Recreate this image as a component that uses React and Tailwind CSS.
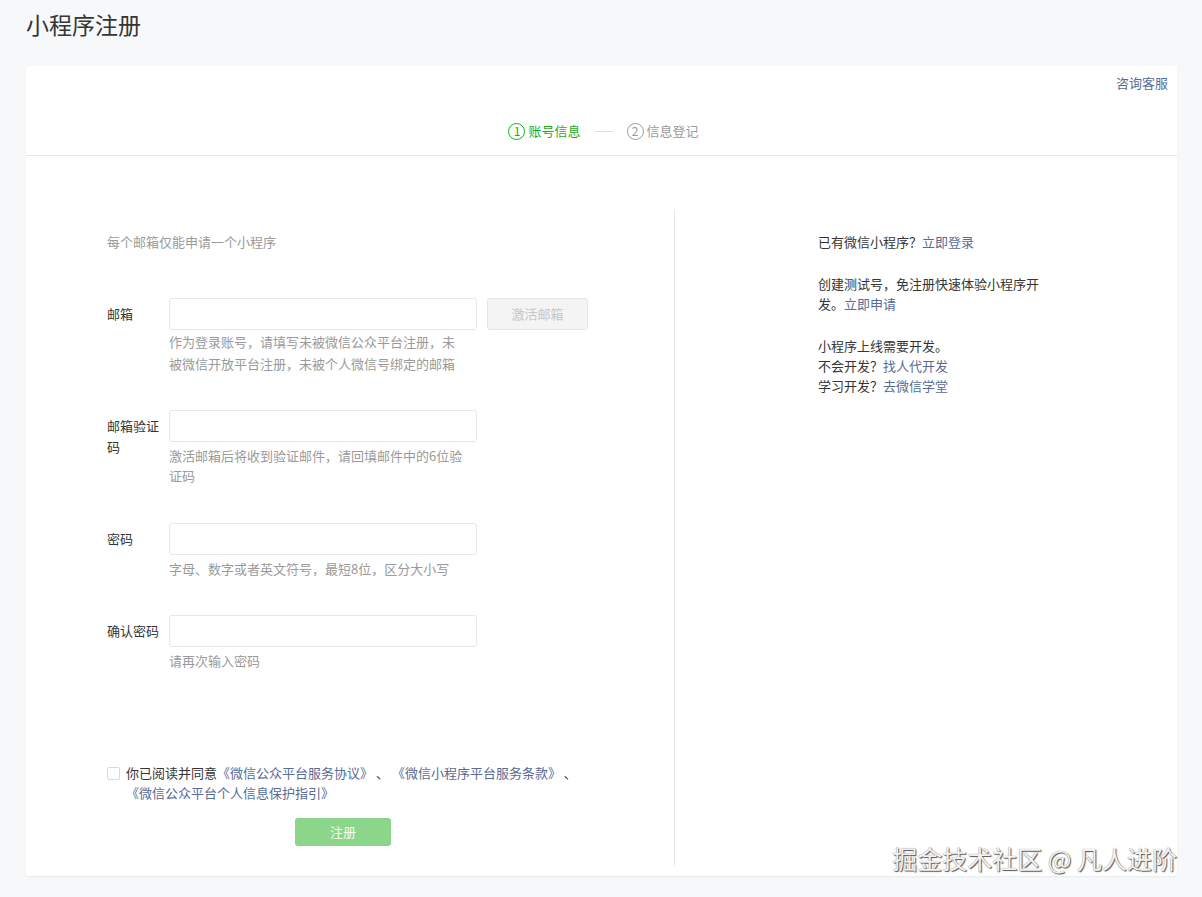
import React from 'react'

const font = { fontFamily: '"Noto Sans CJK SC", "Noto Sans", sans-serif' }

function clsx2(...c) {
  return c.filter(Boolean).join(' ')
}

function Field({ label, labelClass = 'pt-[6px] leading-[20px]', helper, helperClass = 'leading-[20px] mt-[4px]', button, className = '' }) {
  return (
    <div className={`flex ${className}`}>
      <div className={`w-[62px] shrink-0 pr-[10px] text-[13px] text-[#353535] ${labelClass}`}>{label}</div>
      <div>
        <div className="flex">
          <input className="w-[308px] h-[32px] border border-[#e7e7e7] rounded-[3px] bg-white outline-none px-2 text-[13px]" />
          {button && (
            <button className="ml-[10px] w-[101px] h-[32px] rounded-[3px] border border-[#e5e5e5] bg-[#f4f4f4] text-[13px] text-[#c6c6c6]">
              {button}
            </button>
          )}
        </div>
        <p className={`w-[296px] text-[13px] text-[#9a9a9a] ${helperClass}`}>{helper}</p>
      </div>
    </div>
  )
}

function Circle({ n, active }) {
  return (
    <span
      className={clsx2(
        'inline-flex items-center justify-center w-[17px] h-[17px] rounded-full border text-[12px] leading-none mr-[3px]',
        active ? 'border-[#1aad19] text-[#1aad19]' : 'border-[#9a9a9a] text-[#9a9a9a]'
      )}
    >
      {n}
    </span>
  )
}

export default function App() {
  return (
    <div className="relative min-h-[897px] bg-[#f6f8f9] pl-[26px] pr-[25px]" style={font}>
      <h1 className="pt-[8px] text-[23px] leading-[32px] text-[#353535] font-normal">小程序注册</h1>

      <div className="mt-[26px] bg-white rounded-[2px] shadow-[0_1px_2px_rgba(0,0,0,0.06)]">
        {/* header */}
        <div className="border-b border-[#e7e7e7] pb-[14px]">
          <div className="flex justify-end px-[9px] pt-[8px] text-[13px] leading-[18px]">
            <a className="text-[#576b95] cursor-pointer">咨询客服</a>
          </div>
          <div className="mt-[29px] flex items-center justify-center h-[20px] text-[13px] pl-[4px]">
            <Circle n="1" active />
            <span className="text-[#1aad19]">账号信息</span>
            <span className="mx-[14px] w-[18px] h-px bg-[#e0e0e0]" />
            <Circle n="2" />
            <span className="text-[#9a9a9a]">信息登记</span>
          </div>
        </div>

        {/* body */}
        <div className="flex pt-[54px] pb-[10px]">
          <div className="w-[649px] border-r border-[#e7e7e7] pl-[81px] pt-[22px] pb-[20px]">
            <p className="text-[13px] leading-[20px] text-[#9a9a9a]">每个邮箱仅能申请一个小程序</p>

            <Field
              className="mt-[46px]"
              label="邮箱"
              button="激活邮箱"
              helperClass="leading-[22px] mt-px"
              helper="作为登录账号，请填写未被微信公众平台注册，未被微信开放平台注册，未被个人微信号绑定的邮箱"
            />
            <Field
              className="mt-[35px]"
              label="邮箱验证码"
              labelClass="pt-[5px] leading-[21px]"
              helper="激活邮箱后将收到验证邮件，请回填邮件中的6位验证码"
            />
            <Field className="mt-[37px]" label="密码" helper="字母、数字或者英文符号，最短8位，区分大小写" />
            <Field className="mt-[36px]" label="确认密码" helper="请再次输入密码" />

            <div className="mt-[92px] flex text-[13px] leading-[20px]">
              <span className="mt-[4px] w-[13px] h-[13px] shrink-0 border border-[#d9d9d9] rounded-[2px] bg-white" />
              <p className="ml-[6px] w-[460px] text-[#353535]">
                你已阅读并同意
                <a className="text-[#576b95]">《微信公众平台服务协议》</a>{' '}、{' '}
                <a className="text-[#576b95]">《微信小程序平台服务条款》</a>{' '}、{' '}
                <a className="text-[#576b95]">《微信公众平台个人信息保护指引》</a>
              </p>
            </div>

            <button className="mt-[15px] ml-[188px] w-[96px] h-[28px] rounded-[3px] bg-[#8cd68c] text-[13px] text-white/90">
              注册
            </button>
          </div>

          <div className="pl-[143px] pt-[22px] text-[13px] leading-[20px] text-[#353535]">
            <p>
              已有微信小程序？<a className="text-[#576b95]">立即登录</a>
            </p>
            <p className="mt-[22px] w-[226px]">
              创建测试号，免注册快速体验小程序开发。<a className="text-[#576b95]">立即申请</a>
            </p>
            <div className="mt-[22px]">
              <p>小程序上线需要开发。</p>
              <p>
                不会开发？<a className="text-[#576b95]">找人代开发</a>
              </p>
              <p>
                学习开发？<a className="text-[#576b95]">去微信学堂</a>
              </p>
            </div>
          </div>
        </div>
      </div>

      <div className="absolute right-[25px] top-[842px] text-[25px] leading-[32px] text-[#f2f2f2] [text-shadow:1px_1px_1px_#555,0_0_1px_#777] whitespace-nowrap">
        掘金技术社区 @ 凡人进阶
      </div>
    </div>
  )
}
